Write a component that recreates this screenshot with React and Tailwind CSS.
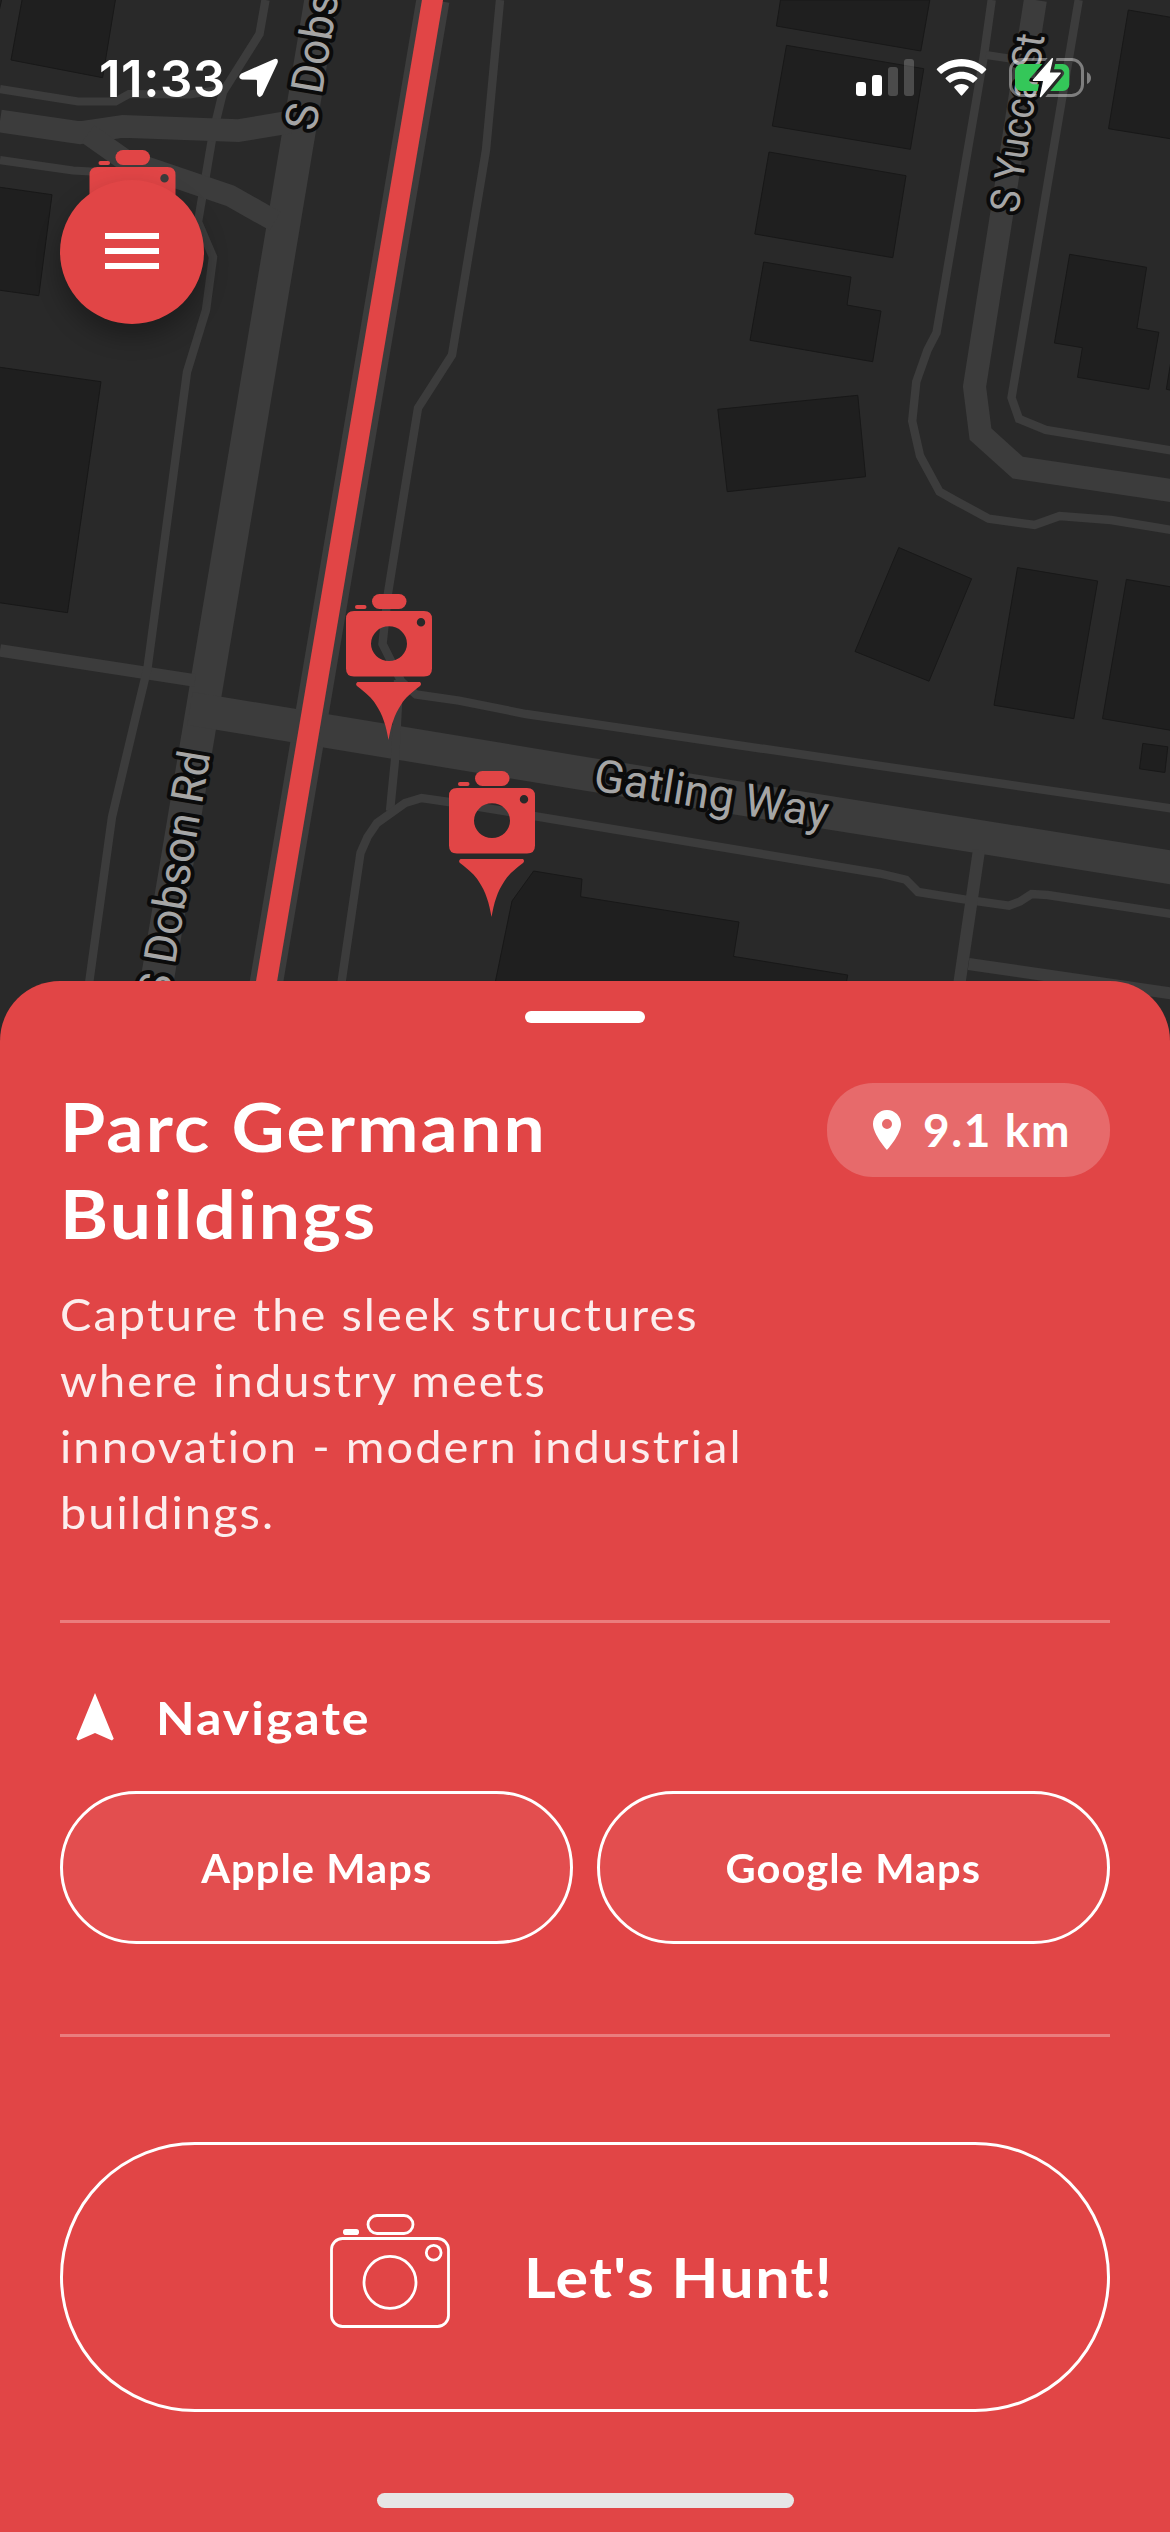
import { MdLocationOn, MdNavigation } from "react-icons/md";

const buildings = [
  "780.5,0 776.4,26 920.8,51 929.8,0",
  "786.5,45.3 923.8,68.7 910.4,149.3 772.3,126",
  "769,152 906,175.7 892.8,257.7 754.8,234",
  "763.7,262 851,277 847,305 881,311 872.7,361.7 750,340.3",
  "717.8,409.3 857.8,395.3 865.6,476.7 727.2,491.7",
  "1128.3,10 1172,17.5 1172,139 1108.5,128.7",
  "1069.7,254.3 1146.6,267.3 1136.9,328.3 1158.9,332.3 1148.8,389.3 1077.5,377.3 1082.4,347.7 1054.4,343",
  "1172,355 1166.3,389.3 1172,390.5",
  "898.8,547.5 971.6,578.8 929,681.2 855,651.5",
  "1017.5,567.6 1097.7,581 1073.8,718.7 994,705.2",
  "1126.4,579.4 1172,587 1172,730.5 1102.5,718.7",
  "1142.8,743.4 1167.8,746.8 1164.9,772.5 1139.5,768.8",
  "533.6,871 582,879 580.6,896.7 739,922 733.5,956.4 847.7,975 840,1020 489,1020 495.5,981 512,901",
  "22.4,-2 115.7,-2 102.6,77.7 11,60",
  "-2,-2 2,-2 -2,16",
  "-2,187 52,194.7 38.8,295.7 -2,290",
  "-2,367 101,381.7 67.5,612.7 -2,602.5",
];

const roads = [
  { w: 33.2, d: "M433,0 L260,1020" },
  { w: 33.2, d: "M321,0 L237.5,500 L150.5,1020" },
  { w: 33.5, d: "M190,708.5 L585,773.7 L1175,868" },
  { w: 12.4, d: "M0,650.5 L195,680.5" },
  { w: 8.4, d: "M265.5,0 L259.5,34 L223,92 L213,133 L198,222 L213,257 L206,310 L187,372 L170,500 L147.5,668 L135,720 L112,817 L84,1020" },
  { w: 8.2, d: "M0,89 L78,101.5 L115.5,101.5 L129,94 L190,94.5 L223,89" },
  { w: 22.7, d: "M0,121 L80,132.7 L123,126.3 L238,130.7 L290,122" },
  { w: 21.5, d: "M88,134 L125,160 L230,195.7 L275,221" },
  { w: 8.2, d: "M0,160 L73,170.5 L100,172" },
  { w: 8.4, d: "M500,0 L486,150 L452,355 L418,408 L403,500 L388,593 L382.5,644 L401,681 L416,694.5 L459,700.7 L526,714 L585,722.7 L1175,809" },
  { w: 8.4, d: "M398,680 L398,703 L395,760 L390,811" },
  { w: 8.4, d: "M336,1020 L360.5,853 L367.5,837 L377,823 L405,803 L421.6,798 L449,802 L585,824.5 L880,873.5 L906,879.7 L918,892 L965.6,899.6 L1009,905.7 L1020,901.6 L1031.6,894 L1047.7,895 L1175,914.5" },
  { w: 12.2, d: "M979,850 L954,1020" },
  { w: 12, d: "M968.6,964 L1175,994" },
  { w: 8.4, d: "M991.7,0 L984,55 L936.5,332.7 L927.5,350 L916.3,381.7 L912.2,421 L920,455.7 L939.5,491.7 L956,501 L988.7,518.6 L1034.6,525 L1059.6,516 L1111,520 L1175,530.5" },
  { w: 8, d: "M986,55 L1020,60" },
  { w: 23, d: "M1035.4,0 L974.5,386.7 L980.5,434 L1017.8,467.7 L1175,491" },
  { w: 8.4, d: "M1078.7,0 L1011.5,397.7 L1019,419 L1045.8,430 L1175,451" },
];

const labels = [
  { text: "Gatling Way", x: 592, y: 790, angle: 9.3, length: 237, size: 45 },
  { text: "S Dobson Rd", x: 168.5, y: 1002, angle: -80.4, length: 252, size: 45 },
  { text: "S Dobson Rd", x: 315.5, y: 132, angle: -80.4, length: 252, size: 45 },
  { text: "S Yucca St", x: 1018, y: 214, angle: -81.5, length: 180, size: 41 },
];

const pins = [
  { x: 89.5, y: 150 },
  { x: 346, y: 594 },
  { x: 449, y: 771 },
];

const bolt = "M43.300,.8 L24.500,22.300 H35 L31.500,38.500 L51,15.200 H40 Z";

function CameraPin({ x, y }) {
  return (
    <g transform={`translate(${x} ${y})`} fill="#e14546">
      <rect x="26" y="0" width="34.5" height="15" rx="7.5" />
      <rect x="9" y="11" width="11.5" height="4" rx="2" />
      <path
        fillRule="evenodd"
        d="M8,17 H78 Q86,17 86,25 V74.500 Q86,82.500 78,82.500 H8 Q0,82.500 0,74.500 V25 Q0,17 8,17 Z M61,49.700 a18,17.400 0 1 0 -36,0 a18,17.400 0 1 0 36,0 Z M79.200,28.300 a4.200,4.300 0 1 0 -8.400,0 a4.200,4.300 0 1 0 8.400,0 Z"
      />
      <path d="M11.500,88 H74 Q76,90 74,92 C65,99 59,104 55.500,110 C48,121 45,132 42.500,146 C40,132 37,121 29.500,110 C26,104 20,99 11,92 Q9,90 11.500,88 Z" />
    </g>
  );
}

function CityMap() {
  return (
    <svg className="absolute left-0 top-0 h-[1060px] w-[1170px]" viewBox="0 0 1170 1060">
      <rect width="1170" height="1060" fill="#292929" />
      {buildings.map((points) => (
        <polygon key={points} points={points} fill="#1f1f1f" stroke="#181818" strokeWidth="1" />
      ))}
      {roads.map((road) => (
        <path key={road.d} d={road.d} fill="none" stroke="#3c3c3c" strokeWidth={road.w} />
      ))}
      <path d="M433,-3 L260,1020" fill="none" stroke="#e14546" strokeWidth="20.800" />
      {labels.map((label) => (
        <text
          key={label.x}
          transform={`translate(${label.x} ${label.y}) rotate(${label.angle})`}
          textLength={label.length}
          lengthAdjust="spacingAndGlyphs"
          fontSize={label.size}
          fontFamily="Roboto, sans-serif"
          fill="#a5a5a5"
          stroke="#0b0b0b"
          strokeWidth="8"
          strokeLinejoin="round"
          paintOrder="stroke"
        >
          {label.text}
        </text>
      ))}
      {pins.map((pin) => (
        <CameraPin key={pin.x} x={pin.x} y={pin.y} />
      ))}
    </svg>
  );
}

function StatusBar() {
  return (
    <div className="relative flex h-[156px] items-center justify-between pl-[99px] pr-[79px] text-white">
      <div className="flex items-center">
        <span className="w-[140px] whitespace-nowrap font-['Inter'] text-[51px] font-semibold leading-none tracking-[0.5px]">
          11:33
        </span>
        <svg className="h-10 w-10" viewBox="0 0 40 40" fill="white">
          <path d="M35.500,1 L2,15.700 Q-2,20 3,21.500 L17,21.800 Q18,21.800 18,23.200 L18,36 Q19.500,41.500 23.500,37 L38.500,5 Q40,0 35.500,1 Z" />
        </svg>
      </div>
      <div className="flex items-center">
        <svg className="h-10 w-[58px]" viewBox="0 0 58 40" fill="white">
          <rect x="0" y="24" width="10" height="14" rx="3" />
          <rect x="16" y="17" width="10" height="21" rx="3" />
          <rect x="32" y="9" width="10" height="29" rx="3" opacity=".2" />
          <rect x="48" y="1" width="10" height="37" rx="3" opacity=".2" />
        </svg>
        <svg className="ml-[22px] h-10 w-[51px]" viewBox="0 0 51 40" fill="white">
          <path d="M25.500,1 C35,1 43.500,4.700 50,10.700 Q50.600,11.400 50,12 L46.500,15.500 Q45.800,16.100 45,15.500 C39.800,10.700 33,8.500 25.500,8.500 C18,8.500 11.200,10.700 6,15.500 Q5.200,16.100 4.500,15.500 L1,12 Q.4,11.400 1,10.700 C7.500,4.700 16,1 25.500,1 Z" />
          <path d="M25.500,13.700 C31.500,13.700 37,16 41.200,19.800 Q41.800,20.500 41.200,21.100 L37.600,24.600 Q37,25.200 36.300,24.600 C33.400,22.100 29.600,20.700 25.500,20.700 C21.400,20.700 17.600,22.100 14.700,24.600 Q14,25.200 13.400,24.600 L9.800,21.100 Q9.200,20.500 9.800,19.800 C14,16 19.500,13.700 25.500,13.700 Z" />
          <path d="M25.500,26 C28.300,26 30.700,27 32.500,28.600 Q33.100,29.200 32.500,29.900 L26.200,37.300 Q25.500,38 24.800,37.300 L18.500,29.900 Q17.900,29.200 18.500,28.600 C20.300,27 22.700,26 25.500,26 Z" />
        </svg>
        <svg className="ml-[22px] h-10 w-[82px]" viewBox="0 0 82 40">
          <mask id="bolt-gap" maskUnits="userSpaceOnUse" x="0" y="0" width="82" height="40">
            <rect width="82" height="40" fill="white" />
            <path d={bolt} fill="black" stroke="black" strokeWidth="8" strokeLinejoin="round" />
          </mask>
          <g mask="url(#bolt-gap)">
            <rect x="1.500" y="1.500" width="72" height="36" rx="11" fill="none" stroke="white" strokeOpacity=".4" strokeWidth="3" />
            <rect x="6" y="6" width="54.300" height="27" rx="6.500" fill="#34c759" />
          </g>
          <path d="M78,14 Q82,16 82,20 Q82,24 78,26 Z" fill="white" fillOpacity=".4" />
          <path d={bolt} fill="white" stroke="white" strokeWidth="1.500" strokeLinejoin="round" />
        </svg>
      </div>
    </div>
  );
}

function CameraOutline() {
  return (
    <svg className="mb-[14px] h-[116px] w-[120px]" viewBox="0 0 120 116" fill="none" stroke="white" strokeWidth="2.800">
      <rect x="1.500" y="26.500" width="117" height="88" rx="11" />
      <rect x="38" y="3.500" width="45" height="18" rx="9" />
      <rect x="13" y="17" width="16" height="6" rx="2.800" fill="white" stroke="none" />
      <circle cx="60" cy="70.300" r="26" />
      <circle cx="103.700" cy="40.700" r="7.400" />
    </svg>
  );
}

export default function App() {
  return (
    <main className="relative flex h-[2532px] w-[1170px] flex-col overflow-hidden bg-[#292929] font-['Lato',sans-serif] text-white">
      <CityMap />
      <StatusBar />
      <button
        aria-label="Menu"
        className="relative ml-[60px] mt-6 flex size-36 flex-col items-center justify-center gap-[9px] rounded-full bg-[#e14546] pb-[2px] pr-px shadow-[0_12px_24px_rgba(0,0,0,0.3)]"
      >
        <span className="h-1.5 w-[54px] bg-white" />
        <span className="h-1.5 w-[54px] bg-white" />
        <span className="h-1.5 w-[54px] bg-white" />
      </button>

      <section className="relative mt-auto flex h-[1551px] flex-col rounded-t-[60px] bg-[#e14546] px-[60px]">
        <div className="mt-[30px] h-3 w-[120px] self-center rounded-full bg-white" />
        <div className="mt-[60px] flex items-start justify-between">
          <div className="w-[720px]">
            <h1 className="origin-left scale-x-[1.1] whitespace-nowrap text-[66.5px] font-bold leading-[87px] tracking-[2px]">
              Parc Germann
              <br />
              Buildings
            </h1>
            <p className="mt-[24px] origin-left scale-x-[1.043] whitespace-nowrap text-[45px] leading-[66px] tracking-[2px] text-white/90">
              Capture the sleek structures
              <br />
              where industry meets
              <br />
              innovation - modern industrial
              <br />
              buildings.
            </p>
          </div>
          <div className="flex h-[94px] w-[283px] items-center gap-3 rounded-[46px] bg-white/20 pl-9">
            <MdLocationOn className="size-12" />
            <span className="whitespace-nowrap text-[46px] font-bold leading-none tracking-[1.6px]">9.1 km</span>
          </div>
        </div>

        <hr className="mt-[75px] h-[3px] border-0 bg-white/30" />
        <div className="mt-[65px] flex h-[60px] items-center gap-[31px] pl-[5px]">
          <MdNavigation className="size-[60px]" />
          <h2 className="origin-left scale-x-[1.09] text-[46px] font-bold leading-none tracking-[1.8px]">Navigate</h2>
        </div>
        <div className="mt-[43px] grid grid-cols-2 gap-6">
          <button className="h-[153px] rounded-full border-3 border-white bg-white/5 text-[39.5px] font-bold tracking-[1px]">
            <span className="inline-block scale-x-[1.053]">Apple Maps</span>
          </button>
          <button className="h-[153px] rounded-full border-3 border-white bg-white/5 text-[39.5px] font-bold tracking-[1px]">
            <span className="inline-block scale-x-[1.053]">Google Maps</span>
          </button>
        </div>
        <hr className="mt-[90px] h-[3px] border-0 bg-white/30" />

        <button className="mt-[105px] flex h-[270px] shrink-0 items-center rounded-full border-3 border-white pl-[267px]">
          <CameraOutline />
          <span className="ml-[74px] origin-left scale-x-[1.09] whitespace-nowrap text-[56px] font-bold leading-none tracking-[1.3px]">
            Let's Hunt!
          </span>
        </button>
        <div className="mt-[81px] h-[15px] w-[417px] shrink-0 self-center rounded-full bg-[#e6e6e6]" />
      </section>
    </main>
  );
}
